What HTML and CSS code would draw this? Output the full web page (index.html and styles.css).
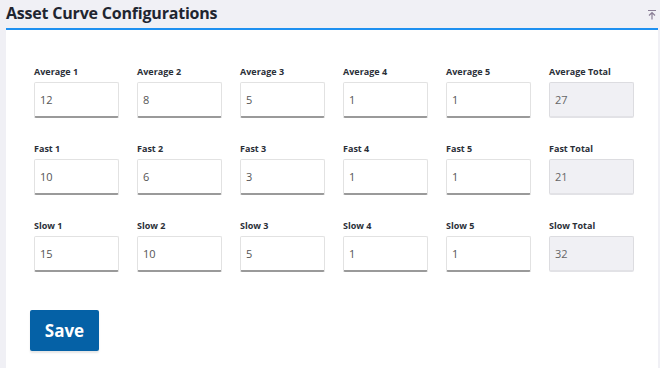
FILE: index.html
```html
<!DOCTYPE html>
<html lang="en">
<head>
  <meta charset="UTF-8" />
  <meta name="viewport" content="width=device-width, initial-scale=1.0" />
  <title>Asset Curve Configurations</title>
  <link rel="stylesheet" href="styles.css">
</head>
<body>
  <div class="panel">
    <div class="panel-head">
      <h1 class="title">Asset Curve Configurations</h1>
      <!-- collapse to top -->
      <svg class="collapse" viewBox="0 0 10 11" width="10" height="11">
        <path d="M1 1.5 H9 M5 3.5 V10.5 M2 6.5 L5 3.5 L8 6.5" fill="none" stroke="#8a7f96" stroke-width="1.2"/>
      </svg>
    </div>

    <div class="panel-body">
      <div class="grid">
        <div class="field"><label>Average 1</label><input type="text" value="12"></div>
        <div class="field"><label>Average 2</label><input type="text" value="8"></div>
        <div class="field"><label>Average 3</label><input type="text" value="5"></div>
        <div class="field"><label>Average 4</label><input type="text" value="1"></div>
        <div class="field"><label>Average 5</label><input type="text" value="1"></div>
        <div class="field"><label>Average Total</label><input type="text" class="total" value="27" disabled></div>

        <div class="field"><label>Fast 1</label><input type="text" value="10"></div>
        <div class="field"><label>Fast 2</label><input type="text" value="6"></div>
        <div class="field"><label>Fast 3</label><input type="text" value="3"></div>
        <div class="field"><label>Fast 4</label><input type="text" value="1"></div>
        <div class="field"><label>Fast 5</label><input type="text" value="1"></div>
        <div class="field"><label>Fast Total</label><input type="text" class="total" value="21" disabled></div>

        <div class="field"><label>Slow 1</label><input type="text" value="15"></div>
        <div class="field"><label>Slow 2</label><input type="text" value="10"></div>
        <div class="field"><label>Slow 3</label><input type="text" value="5"></div>
        <div class="field"><label>Slow 4</label><input type="text" value="1"></div>
        <div class="field"><label>Slow 5</label><input type="text" value="1"></div>
        <div class="field"><label>Slow Total</label><input type="text" class="total" value="32" disabled></div>
      </div>

      <button class="save">Save</button>
    </div>
  </div>
</body>
</html>
```

FILE: styles.css
```css
body {
  margin: 0;
  background-color: #f0f0f5;
  font-family: "Open Sans", Arial, sans-serif;
  color: #222;
}
.panel {
  margin-left: 6px;
  width: 652px;
  height: 368px;
  display: flex;
  flex-direction: column;
}
.panel-head {
  height: 28px;
  display: flex;
  justify-content: space-between;
  align-items: flex-start;
  border-bottom: 2px solid #1e90f0;
}
.title {
  margin: 0;
  font-size: 16px;
  font-weight: 700;
  line-height: 26px;
  color: #1f2530;
  letter-spacing: -0.2px;
}
.collapse {
  margin-top: 9px;
  margin-right: 1px;
}
.panel-body {
  flex: 1;
  background-color: #fff;
  padding: 36px 0 0 24px;
}
.grid {
  padding-left: 4px;
  display: grid;
  grid-template-columns: repeat(6, 85px);
  column-gap: 18px;
  row-gap: 25px;
}
.field {
  display: flex;
  flex-direction: column;
}
.field label {
  font-size: 9px;
  font-weight: 700;
  color: #2a2f38;
  line-height: 12px;
  margin-bottom: 4px;
}
.field input {
  box-sizing: border-box;
  width: 85px;
  height: 36px;
  border: 1px solid #e2e2e2;
  border-bottom: 2px solid #9a9a9a;
  border-radius: 2px;
  padding: 0 0 0 5px;
  font-family: "Open Sans", Arial, sans-serif;
  font-size: 11px;
  color: #555;
  background-color: #fff;
}
.field input.total {
  background-color: #f0f0f4;
  border: 1px solid #dcdce0;
  border-bottom: 2px solid #e2e2e6;
  color: #666;
}
.save {
  margin-top: 38px;
  width: 69px;
  height: 41px;
  border: none;
  border-radius: 2px;
  background-color: #0561a6;
  color: #fff;
  font-family: "Open Sans", Arial, sans-serif;
  font-size: 17px;
  font-weight: 700;
  box-shadow: 0 2px 2px rgba(0, 0, 0, 0.1);
  cursor: pointer;
}
```
